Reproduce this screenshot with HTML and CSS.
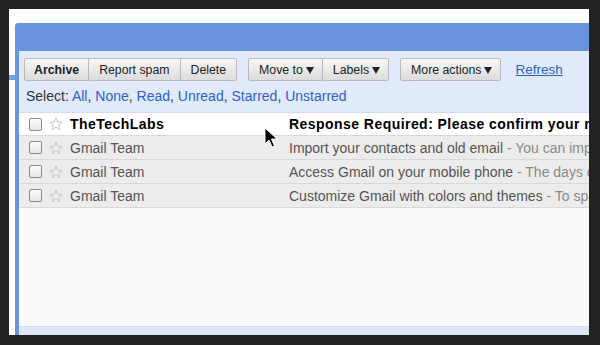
FILE: index.html
```html
<!DOCTYPE html>
<html>
<head>
<meta charset="utf-8">
<link rel="stylesheet" href="styles.css">
</head>
<body>
<div class="frame">
  <div class="side"><div class="side-tab"></div></div>
  <div class="panel">
    <div class="panel-head"></div>
    <div class="toolbar">
      <div class="actions">
        <div class="group">
          <span class="btn bold">Archive</span><span class="btn">Report spam</span><span class="btn">Delete</span>
        </div>
        <div class="group">
          <span class="btn menu">Move to<i class="arrow"></i></span><span class="btn menu">Labels<i class="arrow"></i></span>
        </div>
        <div class="group">
          <span class="btn menu">More actions<i class="arrow"></i></span>
        </div>
        <a class="refresh">Refresh</a>
      </div>
      <div class="select">Select: <a>All</a>, <a>None</a>, <a>Read</a>, <a>Unread</a>, <a>Starred</a>, <a>Unstarred</a></div>
    </div>
    <div class="list">
      <div class="row unread">
        <span class="check"></span>
        <svg class="star" viewBox="0 0 14 14"><path d="M7 1 L8.7 5.1 L13 5.3 L9.7 8.1 L10.8 12.5 L7 10.1 L3.2 12.5 L4.3 8.1 L1 5.3 L5.3 5.1 Z"/></svg>
        <span class="from">TheTechLabs</span>
        <span class="subj">Response Required: Please confirm your request</span>
      </div>
      <div class="row">
        <span class="check"></span>
        <svg class="star" viewBox="0 0 14 14"><path d="M7 1 L8.7 5.1 L13 5.3 L9.7 8.1 L10.8 12.5 L7 10.1 L3.2 12.5 L4.3 8.1 L1 5.3 L5.3 5.1 Z"/></svg>
        <span class="from">Gmail Team</span>
        <span class="subj">Import your contacts and old email<span class="snip"> - You can import your contacts</span></span>
      </div>
      <div class="row">
        <span class="check"></span>
        <svg class="star" viewBox="0 0 14 14"><path d="M7 1 L8.7 5.1 L13 5.3 L9.7 8.1 L10.8 12.5 L7 10.1 L3.2 12.5 L4.3 8.1 L1 5.3 L5.3 5.1 Z"/></svg>
        <span class="from">Gmail Team</span>
        <span class="subj">Access Gmail on your mobile phone<span class="snip"> - The days of needing</span></span>
      </div>
      <div class="row">
        <span class="check"></span>
        <svg class="star" viewBox="0 0 14 14"><path d="M7 1 L8.7 5.1 L13 5.3 L9.7 8.1 L10.8 12.5 L7 10.1 L3.2 12.5 L4.3 8.1 L1 5.3 L5.3 5.1 Z"/></svg>
        <span class="from">Gmail Team</span>
        <span class="subj">Customize Gmail with colors and themes<span class="snip"> - To spice up your inbox</span></span>
      </div>
    </div>
    <div class="blank"></div>
    <div class="foot"></div>
  </div>
  <svg class="cursor" width="14" height="22" viewBox="0 0 14 22"><path d="M1 1 L1 17 L5 13 L8 20 L10.5 19 L7.5 12 L13 12 Z" fill="#000" stroke="#fff" stroke-width="1"/></svg>
</div>
</body>
</html>
```
FILE: styles.css
```css
* { box-sizing: border-box; }
html, body { margin: 0; padding: 0; }
body {
  background: #222222;
  width: 600px;
  height: 345px;
  overflow: hidden;
  font-family: "Liberation Sans", Arial, sans-serif;
}
.frame {
  position: relative;
  margin: 9px 0 0 9px;
  width: 580px;
  height: 326px;
  background: #ffffff;
  overflow: hidden;
  display: flex;
  padding-top: 14px;
}
.side {
  width: 6px;
  flex: none;
}
.side-tab {
  margin-top: 52px;
  height: 5px;
  background: #7aa0e4;
}
.panel {
  flex: none;
  width: 640px;
  border-left: 4px solid #6a93df;
  border-top-left-radius: 3px;
  display: flex;
  flex-direction: column;
  height: 312px;
}
.panel-head {
  height: 28px;
  background: #6a93df;
  flex: none;
}
.toolbar {
  background: #e0eafa;
  height: 62px;
  padding: 7px 0 0 5px;
  border-bottom: 1px solid #d3ddef;
  flex: none;
}
.actions {
  display: flex;
  align-items: center;
  gap: 11px;
}
.group {
  display: flex;
}
.btn {
  display: flex;
  align-items: center;
  height: 23px;
  padding: 0 10px;
  font-size: 12.3px;
  color: #222;
  background: linear-gradient(#f7f7f7, #dcdcdc);
  border: 1px solid #b9b9b9;
  border-left-width: 0;
}
.btn.bold { padding: 0 9px; }
.btn.menu { padding: 0 8px 0 10px; }
.btn:first-child {
  border-left-width: 1px;
  border-radius: 2px 0 0 2px;
}
.btn:last-child { border-radius: 0 2px 2px 0; }
.btn:only-child { border-radius: 2px; }
.bold { font-weight: bold; }
.arrow {
  display: inline-block;
  margin-left: 3px;
  width: 0;
  height: 0;
  border-left: 4px solid transparent;
  border-right: 4px solid transparent;
  border-top: 7px solid #222;
  margin-top: 1px;
}
.refresh {
  margin-left: 3px;
  font-size: 13.5px;
  color: #2f5fc0;
  text-decoration: underline;
}
.select {
  margin-top: 7px;
  padding-left: 2px;
  font-size: 14px;
  color: #333;
}
.select a { color: #2f62cc; }
.list { flex: none; }
.row {
  height: 24px;
  display: flex;
  align-items: center;
  background: #ececec;
  border-bottom: 1px solid #d9d9d9;
  white-space: nowrap;
  font-size: 14px;
  color: #555;
}
.row.unread {
  background: #ffffff;
  color: #000;
  font-weight: bold;
  letter-spacing: 0.45px;
  height: 23px;
}
.check {
  margin-left: 10px;
  width: 13px;
  height: 13px;
  border: 1px solid #8c8c8c;
  border-radius: 2px;
  background: linear-gradient(#fdfdfd, #e4e4e4);
  flex: none;
}
.star {
  margin-left: 7px;
  width: 14px;
  height: 14px;
  flex: none;
  fill: none;
  stroke: #c9c9c9;
  stroke-width: 1;
}
.from {
  margin-left: 7px;
  width: 219px;
  flex: none;
}
.subj { color: inherit; }
.snip { color: #8a8a8a; font-weight: normal; }
.blank {
  flex: none;
  height: 118px;
  background: #f9fafb;
}
.foot {
  flex: 1;
  background: #dde7f7;
  border-top: 1px solid #d0dcef;
}
.cursor {
  position: absolute;
  left: 255px;
  top: 118px;
}
```
